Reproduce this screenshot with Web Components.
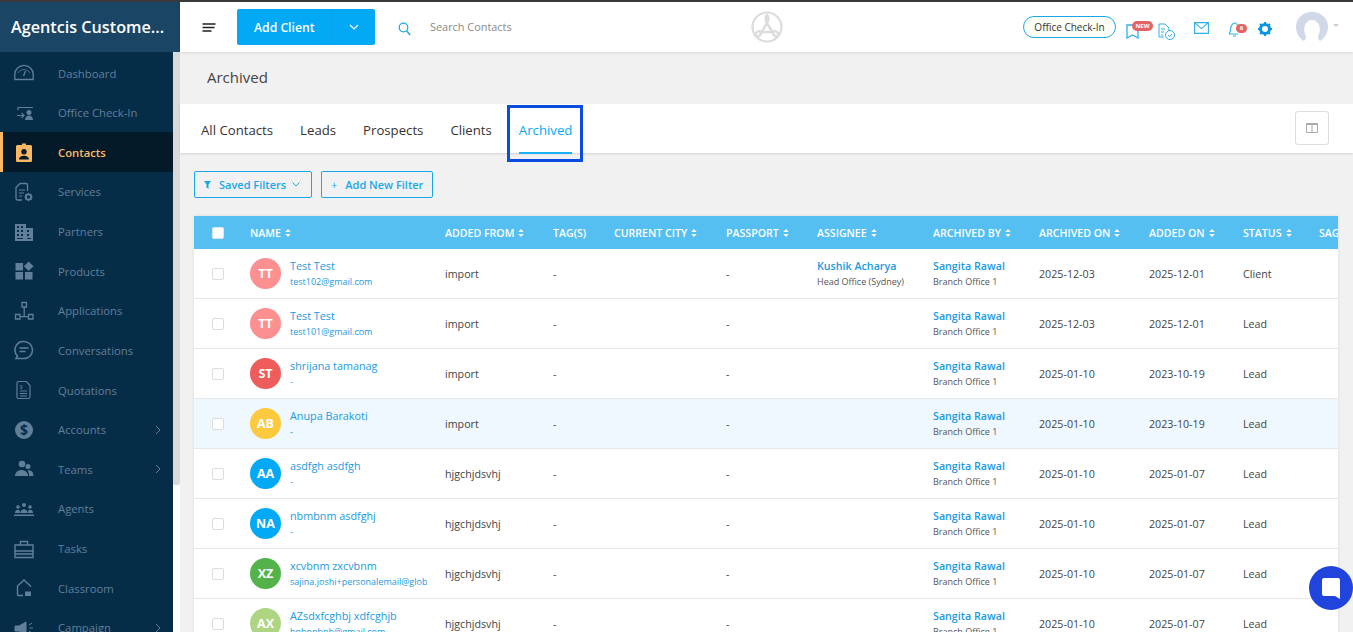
<!DOCTYPE html>
<html>
<head>
<meta charset="utf-8">
<title>Archived</title>
<style>
  html, body { margin: 0; height: 632px; overflow: hidden; background: #f1f1f1; }
  body { font-family: "Open Sans", "Liberation Sans", sans-serif; color: #333; }
  app-shell { height: 632px; }
</style>
</head>
<body>
<app-shell>
  <side-nav slot="side"></side-nav>
  <top-bar slot="top"></top-bar>
  <page-title slot="main">Archived</page-title>
  <tab-bar slot="main"></tab-bar>
  <filter-bar slot="main"></filter-bar>
  <contact-table slot="main">
    <contact-row initials="TT" color="#fc8f8f" name="Test Test" email="test102@gmail.com" from="import" assignee="Kushik Acharya" office="Head Office (Sydney)" archived="2025-12-03" added="2025-12-01" status="Client"></contact-row>
    <contact-row initials="TT" color="#fc8f8f" name="Test Test" email="test101@gmail.com" from="import" archived="2025-12-03" added="2025-12-01" status="Lead"></contact-row>
    <contact-row initials="ST" color="#ef5c5c" name="shrijana tamanag" email="-" from="import" archived="2025-01-10" added="2023-10-19" status="Lead"></contact-row>
    <contact-row hover initials="AB" color="#fdc93f" name="Anupa Barakoti" email="-" from="import" archived="2025-01-10" added="2023-10-19" status="Lead"></contact-row>
    <contact-row initials="AA" color="#03a9f4" name="asdfgh asdfgh" email="-" from="hjgchjdsvhj" archived="2025-01-10" added="2025-01-07" status="Lead"></contact-row>
    <contact-row initials="NA" color="#03a9f4" name="nbmbnm asdfghj" email="-" from="hjgchjdsvhj" archived="2025-01-10" added="2025-01-07" status="Lead"></contact-row>
    <contact-row initials="XZ" color="#53b34a" name="xcvbnm zxcvbnm" email="sajina.joshi+personalemail@glob" from="hjgchjdsvhj" archived="2025-01-10" added="2025-01-07" status="Lead"></contact-row>
    <contact-row initials="AX" color="#aed581" name="AZsdxfcghbj xdfcghjb" email="bnbnnbnb@gmail.com" from="hjgchjdsvhj" archived="2025-01-10" added="2025-01-07" status="Lead"></contact-row>
  </contact-table>
  <chat-launcher slot="over"></chat-launcher>
</app-shell>

<script>
// column widths shared by the header and the rows
const COLUMNS = '56px 195px 108px 61px 112px 91px 116px 106px 110px 94px 76px 100px';

const NAV_ICONS = {
  dashboard: '<path d="M.8 16.500v-5a9.200 9.200 0 0 1 18.400 0v5z" fill="none" stroke="currentColor" stroke-width="1.300"/><path d="M11.500 8l-2 5" fill="none" stroke="currentColor" stroke-width="1.300"/><path d="M4 10a7 7 0 0 1 12 0" fill="none" stroke="currentColor" stroke-width=".8"/>',
  checkin: '<path d="M4 7V4.500h15M3 12.500h7M7.500 10l2.500 2.500L7.500 15" fill="none" stroke="currentColor" stroke-width="1.200"/><circle cx="15" cy="9.500" r="2.500" fill="currentColor"/><path d="M11 17c0-6 8-6 8 0z" fill="currentColor"/>',
  contacts: '<path fill-rule="evenodd" d="M3.500 3H8V1.500h4V3h4.500A1.500 1.500 0 0 1 18 4.500v14a1.500 1.500 0 0 1-1.500 1.500h-13A1.500 1.500 0 0 1 2 18.500v-14A1.500 1.500 0 0 1 3.500 3zM10 7a2.700 2.700 0 1 0 0 5.400A2.700 2.700 0 0 0 10 7zM5 17.500h10c0-5-10-5-10 0z" fill="currentColor"/>',
  services: '<path d="M8 18H3.500A1.500 1.500 0 0 1 2 16.500v-11L6 1.500h6A1.500 1.500 0 0 1 13.500 3v6" fill="none" stroke="currentColor" stroke-width="1.300"/><path d="M5 8h6M5 11h5M5 14h3" stroke="currentColor" stroke-width="1.200"/><circle cx="14.500" cy="15" r="2.600" fill="none" stroke="currentColor" stroke-width="1.800"/><path d="M14.500 10.800v2M14.500 17.200v2M10.300 15h2M16.700 15h2M11.500 12l1.400 1.400M16.100 16.600l1.400 1.400M17.500 12l-1.400 1.400M12.900 16.600L11.500 18" stroke="currentColor" stroke-width="1.200"/>',
  partners: '<path fill-rule="evenodd" d="M1 2h11v4h7v13H1zM3 4v2h2V4zm4 0v2h2V4zM3 8v2h2V8zm4 0v2h2V8zM3 12v2h2v-2zm4 0v2h2v-2zm6-4v2h2V8zm0 4v2h2v-2zM3 16v1h6v-1zm10 0v1h4v-1z" fill="currentColor"/>',
  products: '<path d="M1.500 2h7.500v7.500H1.500zM1.500 11h7.500v7.500H1.500zM11 11h7.500v7.500H11zM14.700 .5l4.800 4.800-4.800 4.800-4.800-4.800z" fill="currentColor"/>',
  applications: '<path d="M8 1.500h4.500V6H8zM1.500 13.500H6V18H1.500zM14.500 13.500H19V18h-4.500zM10.200 6v9.700M6 15.700h8.500" fill="none" stroke="currentColor" stroke-width="1.300"/>',
  conversations: '<path d="M10 1.500a8.500 8.500 0 0 1 0 17H2l1.500-2.500A8.500 8.500 0 0 1 10 1.500z" fill="none" stroke="currentColor" stroke-width="1.500"/><path d="M5.500 8h9M5.500 11.500h6" stroke="currentColor" stroke-width="1.300"/>',
  quotations: '<path d="M4.500 1.500h8l3.500 4V17a1.500 1.500 0 0 1-1.500 1.500h-10A1.500 1.500 0 0 1 3 17V3a1.500 1.500 0 0 1 1.500-1.500z" fill="none" stroke="currentColor" stroke-width="1.200"/><path d="M6 11h7M6 13.500h7M6 16h7" stroke="currentColor"/><text x="5.500" y="8.500" font-size="6" font-family="Open Sans" fill="currentColor">$</text>',
  accounts: '<circle cx="10" cy="10" r="9" fill="currentColor"/><text x="10" y="15" text-anchor="middle" font-size="14" font-weight="700" font-family="Open Sans" fill="#062d48">$</text>',
  teams: '<circle cx="8" cy="5" r="3.300" fill="currentColor"/><circle cx="14" cy="7.500" r="2.500" fill="currentColor"/><path d="M1 17c0-7 10-8 12-3 1 1 1 2 1 3zM15 17c0-3-.5-4-1.500-5.500 3.500-.8 6 1.500 6 5.500z" fill="currentColor"/>',
  agents: '<circle cx="10" cy="6" r="2" fill="currentColor"/><circle cx="4" cy="8" r="1.800" fill="currentColor"/><circle cx="16" cy="8" r="1.800" fill="currentColor"/><path d="M6.500 14c0-5 7-5 7 0zM1 14c0-4 5-4 5-1v1zM14 14v-1c0-3 5-3 5 1zM0 15.500h20V17H0z" fill="currentColor"/>',
  tasks: '<path d="M1 6h18v12.500H1zM6.500 6V2.500h7V6M1 12h18M1 15h18" fill="none" stroke="currentColor" stroke-width="1.400"/>',
  classroom: '<path d="M3.500 17.500V8L10 2l6.500 6v1M3.500 17.500H9" fill="none" stroke="currentColor" stroke-width="1.400"/><path d="M11 13.500h6v4.500h-6z" fill="currentColor"/>',
  campaign: '<path d="M1 8h4l7-4v12l-7-3H1zM15 7l3-2M15.500 10H19M15 13l3 2" fill="currentColor" stroke="currentColor"/>'
};

class SideNav extends HTMLElement {
  constructor() {
    super();
    const items = [
      ['dashboard', 'Dashboard'], ['checkin', 'Office Check-In'], ['contacts', 'Contacts', 'active'],
      ['services', 'Services'], ['partners', 'Partners'], ['products', 'Products'],
      ['applications', 'Applications'], ['conversations', 'Conversations'], ['quotations', 'Quotations'],
      ['accounts', 'Accounts', 'more'], ['teams', 'Teams', 'more'], ['agents', 'Agents'],
      ['tasks', 'Tasks'], ['classroom', 'Classroom'], ['campaign', 'Campaign', 'more']
    ];
    const rows = items.map(([icon, label, flag]) => `
      <div class="item ${flag === 'active' ? 'active' : ''}">
        <svg class="ico" viewBox="0 0 20 20" width="20" height="20">${NAV_ICONS[icon]}</svg>
        <span>${label}</span>
        ${flag === 'more' ? '<svg class="more" width="6" height="10" viewBox="0 0 6 10"><path d="M1 1l4 4-4 4" fill="none" stroke="currentColor"/></svg>' : ''}
      </div>`).join('');
    this.attachShadow({ mode: 'open' }).innerHTML = `
      <style>
        :host { display: flex; flex-direction: column; width: 180px; height: 100%; flex: none; overflow: hidden; background: #fff; }
        .brand { height: 50px; flex: none; background: #1b4565; color: #fff; font-size: 16.200px; font-weight: 600; line-height: 50px; padding-left: 11px; white-space: nowrap; }
        .body { display: flex; flex: 1; min-height: 0; }
        nav { width: 173px; flex: none; background: #062d48; padding-top: 1.200px; }
        .track { width: 7px; height: 433px; background: #d9d9d9; border-radius: 2px; }
        .item { position: relative; display: flex; align-items: center; height: 39.640px; padding-left: 14px; color: #617f99; font-size: 11.300px; box-sizing: border-box; }
        .item span { margin-left: 24px; }
        .ico { flex: none; }
        .more { position: absolute; left: 155px; top: 15px; }
        .active { background: #041a28; color: #fdb863; font-weight: 600; box-shadow: inset 3px 0 0 #fdb863; }
      </style>
      <div class="brand">Agentcis Custome...</div>
      <div class="body"><nav>${rows}</nav><div class="track"></div></div>`;
  }
}
customElements.define('side-nav', SideNav);

class AppShell extends HTMLElement {
  constructor() {
    super();
    this.attachShadow({ mode: 'open' }).innerHTML = `
      <style>
        :host { display: block; border-top: 2px solid #3a3a3a; box-sizing: border-box; position: relative; overflow: hidden; }
        .wrap { display: flex; height: 100%; }
        .col { flex: 1; min-width: 0; display: flex; flex-direction: column; }
      </style>
      <div class="wrap">
        <slot name="side"></slot>
        <div class="col"><slot name="top"></slot><slot name="main"></slot></div>
      </div>
      <slot name="over"></slot>`;
  }
}
customElements.define('app-shell', AppShell);

class TopBar extends HTMLElement {
  constructor() {
    super();
    this.attachShadow({ mode: 'open' }).innerHTML = `
      <style>
        :host { display: flex; align-items: center; height: 50px; flex: none; background: #fff; box-shadow: 0 1px 3px rgba(0,0,0,.1); position: relative; z-index: 2; }
        .burger { margin-left: 22px; width: 14px; flex: none; }
        .add { display: flex; margin-left: 21px; width: 138px; height: 36px; background: #03a9f4; border-radius: 2px; color: #fff; font-size: 12.200px; font-weight: 600; align-items: center; }
        .add b { font-weight: 600; flex: 1; padding-left: 17px; }
        .add i { display: flex; align-items: center; justify-content: center; width: 42px; height: 100%; border-left: 1px solid #07a4ec; }
        .search { margin: 4px 0 0 23px; flex: none; }
        .ph { margin: 0 0 2px 19px; font-size: 10.900px; color: #8a8a8a; }
        .logo { position: absolute; left: 571px; top: 9px; }
        .right { margin-left: auto; display: flex; align-items: center; height: 100%; position: relative; width: 330px; flex: none; }
        .pill { position: absolute; left: 0; top: 14px; width: 93px; height: 22px; box-sizing: border-box; border: 1px solid #1aa9e8; border-radius: 11px; background: #fffef6; font-size: 10px; color: #333; text-align: center; line-height: 20px; white-space: nowrap; }
        .ic { position: absolute; }
        .new { position: absolute; left: 109px; top: 19px; width: 21px; height: 10px; background: #e46363; color: #fff; font-size: 6px; font-weight: 700; border-radius: 5px; text-align: center; line-height: 10px; }
        .count { position: absolute; left: 213px; top: 22px; width: 11px; height: 9px; background: #e46363; color: #fff; font-size: 6px; font-weight: 700; border-radius: 5px; text-align: center; line-height: 9px; }
        .avatar { position: absolute; left: 273px; top: 10px; width: 32px; height: 30px; }
        .caret { position: absolute; left: 310px; top: 22px; width: 0; height: 0; border: 3px solid transparent; border-top: 3px solid #ccc; }
      </style>
      <svg class="burger" viewBox="0 0 14 9" height="9"><path d="M.500 1h13M.500 4.500h12M.500 8h9" stroke="#222" stroke-width="1.300"/></svg>
      <div class="add"><b>Add Client</b><i><svg width="10" height="6" viewBox="0 0 10 6"><path d="M1 1l4 4 4-4" fill="none" stroke="#fff" stroke-width="1.200"/></svg></i></div>
      <svg class="search" width="13" height="14" viewBox="0 0 13 14"><circle cx="5.500" cy="5.500" r="4.300" fill="none" stroke="#1ea7e8" stroke-width="1.300"/><path d="M8.800 9l3.400 4" stroke="#1ea7e8" stroke-width="1.500"/></svg>
      <span class="ph">Search Contacts</span>
      <svg class="logo" width="32" height="32" viewBox="0 0 32 32" fill="none" stroke="#dcdcdc"><circle cx="16" cy="16" r="14.500" stroke-width="2.200"/><path d="M16 4c-3 3-1 5 0 8l7 12c2 3 5 1 4-2-1-2-4-2-6-1H11c-2-1-5-1-6 1-1 3 2 5 4 2l7-12c1-3 3-5 0-8z" stroke-width="2.500"/></svg>
      <div class="right">
        <div class="pill">Office Check-In</div>
        <svg class="ic" style="left:103px;top:22px" width="13" height="15" viewBox="0 0 13 15"><path d="M1 1h11v13l-5.500-3L1 14z" fill="none" stroke="#2ab0ef" stroke-width="1.300"/></svg>
        <div class="new">NEW</div>
        <svg class="ic" style="left:135px;top:21px" width="18" height="18" viewBox="0 0 18 18" fill="none" stroke="#2ab0ef"><path d="M6 14H1V1h6l4 4v3"/><path d="M3 6h4M3 9h3M3 12h2" /><circle cx="12" cy="12" r="4.500"/><path d="M10 12l1.500 1.500L14 11"/></svg>
        <svg class="ic" style="left:171px;top:20px" width="15" height="12" viewBox="0 0 15 12" fill="none" stroke="#2ab0ef" stroke-width="1.100"><path d="M.6.6h13.800v10.800H.6zM.6.6l6.900 6 6.900-6"/></svg>
        <svg class="ic" style="left:205px;top:20px" width="13" height="15" viewBox="0 0 13 15" fill="none" stroke="#2ab0ef" stroke-width="1.100"><path d="M1 12c2-2 1-4 2-7s3-4 4-4 3 2 3 4M1 12h9M5 14h3"/></svg>
        <div class="count">6</div>
        <svg class="ic" style="left:235px;top:20px" width="14" height="14" viewBox="0 0 14 14"><circle cx="7" cy="7" r="4.500" fill="none" stroke="#0a95e0" stroke-width="3"/><path d="M7 0v2.500M7 11.500V14M0 7h2.500M11.500 7H14M2 2l2 2M10 10l2 2M12 2l-2 2M4 10l-2 2" stroke="#0a95e0" stroke-width="2"/></svg>
        <svg class="avatar" viewBox="0 0 32 30"><path d="M8 29C2 25 0 20 0 15 0 6 7 0 16 0s16 6 16 15c0 5-2 10-8 14-3-3-2-4-1-7 1-3 1-6 0-9-1-3-4-5-7-5s-6 2-7 5c-1 3-1 6 0 9 1 3 2 4-1 7z" fill="#d1d9e8"/></svg>
        <span class="caret"></span>
      </div>`;
  }
}
customElements.define('top-bar', TopBar);

class PageTitle extends HTMLElement {
  constructor() {
    super();
    this.attachShadow({ mode: 'open' }).innerHTML = `
      <style>
        :host { display: flex; align-items: center; height: 50px; padding-bottom: 2px; flex: none; padding-left: 27px; font-size: 15px; font-weight: 500; color: #444; }
      </style><slot></slot>`;
  }
}
customElements.define('page-title', PageTitle);

class TabBar extends HTMLElement {
  constructor() {
    super();
    const tabs = ['All Contacts', 'Leads', 'Prospects', 'Clients', 'Archived'];
    this.attachShadow({ mode: 'open' }).innerHTML = `
      <style>
        :host { display: flex; position: relative; align-items: stretch; height: 49px; flex: none; background: #fff; box-shadow: 0 1px 2px rgba(0,0,0,.12); padding-left: 21px; gap: 27px; font-size: 13.200px; font-weight: 500; color: #333; }
        .tab { display: flex; align-items: center; height: 49px; box-sizing: border-box; position: relative; padding-top: 2px; }
        .on { color: #03a9f4; }
        .on::after { content: ""; position: absolute; left: 0; right: 0; bottom: -1px; height: 2px; background: #1ab0f5; }
        .mark { position: absolute; left: 327px; top: 1px; width: 76px; height: 57px; box-sizing: border-box; border: 3px solid #0a4be0; }
        .cols { position: absolute; left: 1115px; top: 7px; width: 34px; height: 34px; box-sizing: border-box; border: 1px solid #dedede; border-radius: 3px; display: flex; align-items: center; justify-content: center; }
      </style>
      ${tabs.map(t => `<div class="tab ${t === 'Archived' ? 'on' : ''}">${t}</div>`).join('')}
      <div class="mark"></div>
      <div class="cols"><svg width="12" height="10" viewBox="0 0 12 10" fill="none" stroke="#aaa"><path d="M.5.500h11v9H.5zM6 .5v9M.5 1.500h11"/></svg></div>`;
  }
}
customElements.define('tab-bar', TabBar);

class FilterBar extends HTMLElement {
  constructor() {
    super();
    this.attachShadow({ mode: 'open' }).innerHTML = `
      <style>
        :host { display: flex; gap: 9px; margin: 18px 0 18px 14px; flex: none; height: 27px; }
        .btn { display: flex; align-items: center; height: 27px; box-sizing: border-box; border: 1px solid #1aa7e8; border-radius: 2px; color: #1aa7e8; font-size: 11px; font-weight: 600; background: transparent; white-space: nowrap; }
        .saved { width: 118px; padding-left: 9px; }
        .new { width: 112px; padding-left: 9px; }
        svg { flex: none; }
      </style>
      <div class="btn saved"><svg width="7" height="8" viewBox="0 0 7 8"><path d="M0 0h7L4.500 3.500V8L2.500 6.500v-3z" fill="#1aa7e8"/></svg><span style="margin-left:8px">Saved Filters</span><svg style="margin-left:6px" width="8" height="5" viewBox="0 0 8 5"><path d="M.5.500L4 4 7.500.5" fill="none" stroke="#1aa7e8"/></svg></div>
      <div class="btn new"><span style="font-weight:400">+</span><span style="margin-left:8px">Add New Filter</span></div>`;
  }
}
customElements.define('filter-bar', FilterBar);

class ContactTable extends HTMLElement {
  constructor() {
    super();
    const heads = [['NAME', 1], ['ADDED FROM', 1], ['TAG(S)', 0], ['CURRENT CITY', 1], ['PASSPORT', 1], ['ASSIGNEE', 1], ['ARCHIVED BY', 1], ['ARCHIVED ON', 1], ['ADDED ON', 1], ['STATUS', 1], ['SAG', 0]];
    const sort = '<svg class="s" width="6" height="8" viewBox="0 0 6 8"><path d="M3 0l2.700 3H.3zM3 8L.3 5h5.400z" fill="#fff"/></svg>';
    this.attachShadow({ mode: 'open' }).innerHTML = `
      <style>
        :host { display: block; margin-left: 14px; width: 1144px; flex: none; background: #fff; overflow: hidden; box-shadow: 0 0 3px rgba(0,0,0,.1); }
        .head { display: grid; grid-template-columns: ${COLUMNS}; height: 33px; align-items: center; background: #56bff2; color: #fff; font-size: 10.600px; font-weight: 600; white-space: nowrap; }
        .head div { display: flex; align-items: center; gap: 4px; overflow: hidden; }
        .cb { width: 12px; height: 12px; margin-left: 18px; background: #fff; border-radius: 2px; border: 1px solid #dfe6ea; box-sizing: border-box; }
      </style>
      <div class="head"><div><span class="cb"></span></div>${heads.map(([t, s]) => `<div>${t}${s ? sort : ''}</div>`).join('')}</div>
      <slot></slot>`;
  }
}
customElements.define('contact-table', ContactTable);

class ContactRow extends HTMLElement {
  constructor() {
    super();
    const a = n => this.getAttribute(n) || '';
    const assignee = a('assignee')
      ? `<div class="who"><b>${a('assignee')}</b><small>${a('office')}</small></div>` : '<div></div>';
    this.attachShadow({ mode: 'open' }).innerHTML = `
      <style>
        :host { display: grid; grid-template-columns: ${COLUMNS}; height: 50px; box-sizing: border-box; border-bottom: 1px solid #e8e8e8; align-items: center; font-size: 10.700px; color: #444; white-space: nowrap; background: #fff; }
        :host([hover]) { background: #eef8fe; }
        .cb { display: block; width: 12px; height: 12px; margin-left: 18px; background: #fff; border: 1px solid #dcdcdc; border-radius: 2px; box-sizing: border-box; }
        .name { display: flex; align-items: center; gap: 9px; overflow: hidden; }
        .av { width: 31px; height: 31px; flex: none; border-radius: 50%; color: #fff; font-size: 12.500px; font-weight: 700; display: flex; align-items: center; justify-content: center; }
        .txt { min-width: 0; width: 137px; overflow: hidden; color: #1a9ae0; }
        .txt div { font-size: 10.800px; line-height: 16px; }
        .txt small { display: block; font-size: 9px; line-height: 14px; margin-top: 1px; }
        .who b { display: block; font-weight: 600; font-size: 10.700px; line-height: 16px; color: #1a9ae0; }
        .who small { display: block; font-size: 9px; line-height: 14px; margin-top: 1px; color: #555; }
      </style>
      <div><span class="cb"></span></div>
      <div class="name"><span class="av" style="background:${a('color')}">${a('initials')}</span><div class="txt"><div>${a('name')}</div><small>${a('email')}</small></div></div>
      <div>${a('from')}</div><div>-</div><div></div><div>-</div>
      ${assignee}
      <div class="who"><b>Sangita Rawal</b><small>Branch Office 1</small></div>
      <div>${a('archived')}</div><div>${a('added')}</div><div>${a('status')}</div><div></div>`;
  }
}
customElements.define('contact-row', ContactRow);

class ChatLauncher extends HTMLElement {
  constructor() {
    super();
    this.attachShadow({ mode: 'open' }).innerHTML = `
      <style>
        :host { position: absolute; left: 1309px; top: 564px; width: 44px; height: 44px; border-radius: 50%; background: #2044dc; display: flex; align-items: center; justify-content: center; z-index: 5; }
      </style>
      <svg width="18" height="21" viewBox="0 0 18 21"><path d="M2 0h14a2 2 0 0 1 2 2v19l-5-3H2a2 2 0 0 1-2-2V2a2 2 0 0 1 2-2z" fill="#fff"/></svg>`;
  }
}
customElements.define('chat-launcher', ChatLauncher);
</script>
</body>
</html>
